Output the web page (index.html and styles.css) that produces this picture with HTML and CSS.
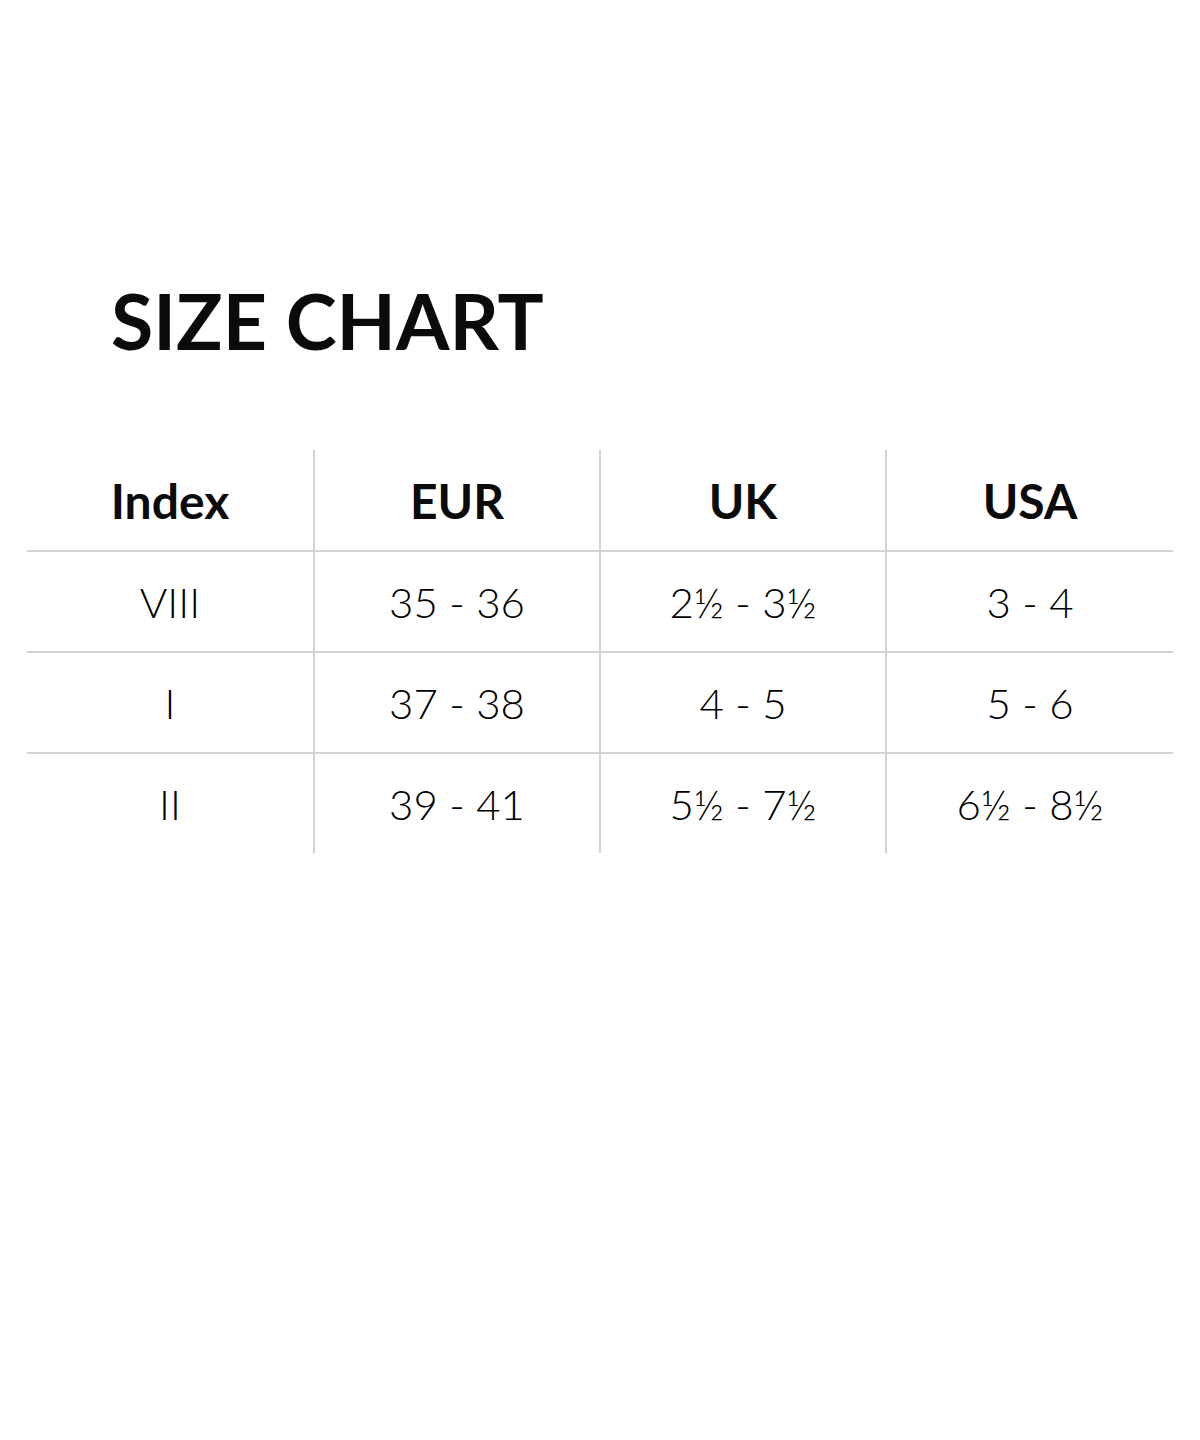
FILE: index.html
```html
<!DOCTYPE html>
<html lang="en">
<head>
<meta charset="utf-8">
<title>Size Chart</title>
<link rel="stylesheet" href="styles.css">
</head>
<body>
<main class="page">
  <h1 class="title">SIZE CHART</h1>
  <div class="chart">
    <div class="cell head">Index</div>
    <div class="cell head v">EUR</div>
    <div class="cell head v">UK</div>
    <div class="cell head v">USA</div>

    <div class="cell row">VIII</div>
    <div class="cell row v">35 - 36</div>
    <div class="cell row v">2½ - 3½</div>
    <div class="cell row v">3 - 4</div>

    <div class="cell row">I</div>
    <div class="cell row v">37 - 38</div>
    <div class="cell row v">4 - 5</div>
    <div class="cell row v">5 - 6</div>

    <div class="cell row">II</div>
    <div class="cell row v">39 - 41</div>
    <div class="cell row v">5½ - 7½</div>
    <div class="cell row v">6½ - 8½</div>
  </div>
</main>
</body>
</html>
```

FILE: styles.css
```css
html, body {
  margin: 0;
  padding: 0;
  background: #ffffff;
}

.page {
  width: 1200px;
  height: 1440px;
  padding-top: 276px;
  box-sizing: border-box;
  font-family: "Lato", "Liberation Sans", sans-serif;
  color: #0b0b0b;
}

.title {
  margin: 0 0 0 111px;
  font-size: 77px;
  font-weight: 700;
  line-height: 88px;
  letter-spacing: 0;
}

.chart {
  margin: 86px 0 0 27px;
  width: 1146px;
  display: grid;
  grid-template-columns: 286px 286px 286px 288px;
  grid-template-rows: 100px 101px 101px 101px;
}

.cell {
  display: flex;
  align-items: center;
  justify-content: center;
  box-sizing: border-box;
}

.v {
  border-left: 2px solid #d2d2d2;
}

.head {
  font-size: 48px;
  font-weight: 700;
}

.row {
  border-top: 2px solid #d2d2d2;
  font-size: 42px;
  font-weight: 300;
  color: #000000;
}
```
